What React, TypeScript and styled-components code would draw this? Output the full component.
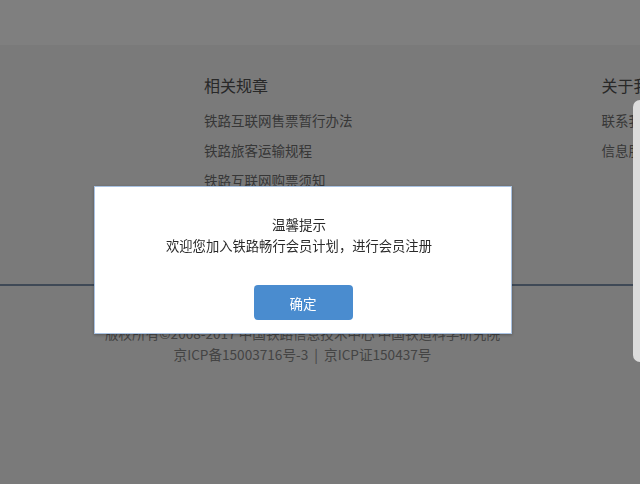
import styled, { createGlobalStyle } from "styled-components";

const GlobalStyle = createGlobalStyle`
  html, body {
    margin: 0;
    padding: 0;
    background: #f5f5f5;
    font-family: "Noto Sans CJK SC", "Noto Sans", sans-serif;
  }
`;

const regulations = ["铁路互联网售票暂行办法", "铁路旅客运输规程", "铁路互联网购票须知"];
const about = ["联系我们", "信息服务"];

export default function App() {
  return (
    <>
      <GlobalStyle />
      <S.Page>
        <S.Header />
        <S.Footer>
          <S.Columns>
            <S.Column>
              <S.ColumnTitle>相关规章</S.ColumnTitle>
              {regulations.map((t) => (
                <S.Link key={t}>{t}</S.Link>
              ))}
            </S.Column>
            <S.Column>
              <S.ColumnTitle>关于我们</S.ColumnTitle>
              {about.map((t) => (
                <S.Link key={t}>{t}</S.Link>
              ))}
            </S.Column>
          </S.Columns>
          <S.Divider />
          <S.Copyright>
            <div>版权所有©2008-2017 中国铁路信息技术中心 中国铁道科学研究院</div>
            <div>京ICP备15003716号-3 &nbsp;|&nbsp; 京ICP证150437号</div>
          </S.Copyright>
        </S.Footer>
      </S.Page>
      <S.Overlay>
        <S.Dialog>
          <S.DialogTitle>温馨提示</S.DialogTitle>
          <S.DialogText>欢迎您加入铁路畅行会员计划，进行会员注册</S.DialogText>
          <S.Button>确定</S.Button>
        </S.Dialog>
      </S.Overlay>
      <S.EdgePanel />
    </>
  );
}

const S = {
  Page: styled.div`
    width: 640px;
    height: 484px;
    overflow: hidden;
    display: flex;
    flex-direction: column;
  `,
  Header: styled.div`
    height: 45px;
    background: #ffffff;
  `,
  Footer: styled.div`
    flex: 1;
    background: #f5f5f5;
    display: flex;
    flex-direction: column;
  `,
  Columns: styled.div`
    display: flex;
    gap: 249px;
    padding: 28px 0 0 204px;
    height: 239px;
    box-sizing: border-box;
    white-space: nowrap;
  `,
  Column: styled.div`
    display: flex;
    flex-direction: column;
  `,
  ColumnTitle: styled.div`
    font-size: 16px;
    line-height: 24px;
    color: #505050;
    margin-bottom: 8px;
  `,
  Link: styled.div`
    font-size: 13.5px;
    line-height: 30px;
    color: #6e6e6e;
  `,
  Divider: styled.div`
    height: 2px;
    background: #7f93ad;
  `,
  Copyright: styled.div`
    padding-top: 37px;
    padding-right: 35px;
    text-align: center;
    font-size: 13.6px;
    line-height: 21px;
    color: #888888;
    white-space: nowrap;
  `,
  Overlay: styled.div`
    position: fixed;
    inset: 0;
    background: rgba(0, 0, 0, 0.5);
    display: flex;
    align-items: flex-start;
    padding: 186px 0 0 94px;
  `,
  Dialog: styled.div`
    width: 418px;
    height: 148px;
    box-sizing: border-box;
    background: #ffffff;
    border: 1px solid #a9c2e2;
    box-shadow: 0 1px 3px rgba(0, 0, 0, 0.3);
    display: flex;
    flex-direction: column;
    align-items: center;
    padding-top: 27px;
  `,
  DialogTitle: styled.div`
    font-size: 13.5px;
    line-height: 21px;
    color: #2a2a2a;
    padding-right: 8px;
  `,
  DialogText: styled.div`
    font-size: 13.3px;
    line-height: 21px;
    color: #2a2a2a;
    padding-right: 8px;
  `,
  Button: styled.button`
    margin-top: 29px;
    width: 99px;
    height: 35px;
    border: none;
    border-radius: 4px;
    background: #4a8ccf;
    color: #ffffff;
    font-family: inherit;
    font-size: 13.5px;
  `,
  EdgePanel: styled.div`
    position: fixed;
    top: 100px;
    right: 0;
    width: 7px;
    height: 262px;
    background: #dcdcdc;
    border-radius: 8px 0 0 8px;
  `,
};
